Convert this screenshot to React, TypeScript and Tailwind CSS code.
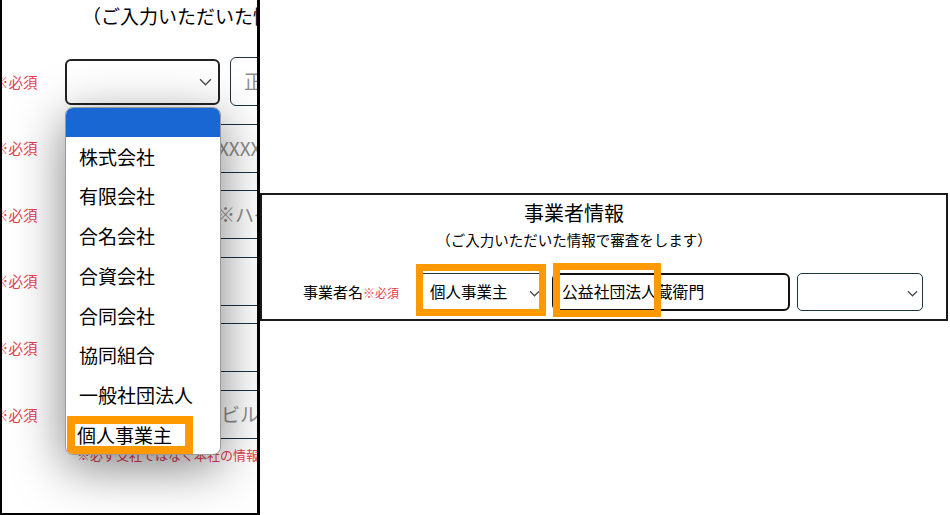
import React from "react";

const font = { fontFamily: '"Noto Sans CJK JP", "Noto Sans", sans-serif' };

function Chevron({ className }: { className: string }) {
  return (
    <svg className={className} viewBox="0 0 12 7" fill="none">
      <path d="M1 1l5 5 5-5" stroke="#4b4b4b" strokeWidth="1.3" />
    </svg>
  );
}

const options = [
  "株式会社",
  "有限会社",
  "合名会社",
  "合資会社",
  "合同会社",
  "協同組合",
  "一般社団法人",
];

function FormRow({ children }: { children?: React.ReactNode }) {
  return (
    <div className="flex items-center h-[49px]">
      <div className="w-[36px] shrink-0 overflow-hidden whitespace-nowrap text-[14.5px] text-[#e5404f]">
        <span className="inline-block -ml-[8px]">※必須</span>
      </div>
      <div className="ml-[27px] shrink-0 flex items-center">{children}</div>
    </div>
  );
}

function WideInput({ text, pad }: { text?: string; pad: string }) {
  return (
    <div
      className={`w-[320px] h-[49px] shrink-0 border border-[#1c3142] rounded-[6px] flex items-center whitespace-nowrap text-[19px] text-[#8d8d8d] ${pad}`}
    >
      {text}
    </div>
  );
}

function LeftPanel() {
  return (
    <div className="relative w-[260px] h-[515px] shrink-0 overflow-hidden border-l-2 border-r-[3px] border-b-2 border-black bg-white">
      <div className="pt-[3px] pl-[80px] text-[19px] leading-[26px] whitespace-nowrap text-black">
        （ご入力いただいた情報で審査をします）
      </div>
      <div className="mt-[28px] flex flex-col gap-[17.6px]">
        <FormRow>
          <div className="w-[155px] h-[46px] shrink-0 border-2 border-[#222] rounded-[6px] flex items-center justify-end pr-[6px]">
            <Chevron className="w-[13px] h-[8px]" />
          </div>
          <div className="ml-[10px] w-[200px] h-[49px] shrink-0 border border-[#1c3142] rounded-[6px] flex items-center pl-[13px] whitespace-nowrap text-[19px] text-[#8d8d8d]">
            正式名称
          </div>
        </FormRow>
        <FormRow>
          <WideInput text="XXXXXXXXXX" pad="pl-[141px]" />
        </FormRow>
        <FormRow>
          <WideInput text="※ハイフンなし" pad="pl-[150px]" />
        </FormRow>
        <FormRow>
          <WideInput pad="pl-[12px]" />
        </FormRow>
        <FormRow>
          <WideInput pad="pl-[12px]" />
        </FormRow>
        <FormRow>
          <WideInput text="ビル名" pad="pl-[155px]" />
        </FormRow>
      </div>
      <div className="mt-[7px] pl-[75px] text-[13px] leading-[18px] whitespace-nowrap text-[#e5404f]">
        ※必ず支社ではなく本社の情報をご入力ください
      </div>

      {/* open select menu */}
      <div className="absolute left-[63px] top-[107px] w-[156px] h-[348px] bg-white border border-[#9a9a9a] rounded-[8px] overflow-hidden shadow-[0_12px_50px_rgba(0,0,0,0.5)] text-[19px] text-black">
        <div className="h-[29px] bg-[#1967d2]" />
        {options.map((o) => (
          <div key={o} className="h-[39.75px] flex items-center pl-[13px] whitespace-nowrap">
            {o}
          </div>
        ))}
        <div className="h-[39.75px] flex items-center">
          <div className="ml-[1px] w-[126px] h-[38px] border-8 border-[#ff9900] flex items-center pl-[2px] whitespace-nowrap">
            個人事業主
          </div>
        </div>
      </div>
    </div>
  );
}

function RightPanel() {
  return (
    <div className="flex-1 pt-[193px]">
      <div className="w-[688px] h-[128px] border-2 border-[#1a1a1a] bg-white">
        <div className="pr-[60px] flex flex-col items-center">
          <div className="mt-[4px] text-[20px] leading-[28px] text-black">事業者情報</div>
          <div className="mt-[2px] text-[14.5px] leading-[22px] text-black">
            （ご入力いただいた情報で審査をします）
          </div>
        </div>
        <div className="mt-[22px] flex items-center pl-[41px]">
          <div className="flex items-baseline whitespace-nowrap">
            <span className="text-[15px] text-black">事業者名</span>
            <span className="text-[12px] text-[#e5404f]">※必須</span>
          </div>
          <div className="relative ml-[20px] w-[127px] h-[38px] border border-[#1d3445] rounded-[5px] flex items-center pl-[10px] text-[15.5px] text-black whitespace-nowrap">
            個人事業主
            <Chevron className="absolute right-[5px] top-[16px] w-[11px] h-[7px]" />
            <div className="absolute -left-[4px] -right-[1px] -top-[10px] -bottom-[6px] border-[7px] border-[#ff9900]" />
          </div>
          <div className="relative ml-[6px] w-[238px] h-[38px] border-2 border-[#111] rounded-[6px] flex items-center pl-[8px] text-[15.8px] text-black whitespace-nowrap">
            公益社団法人蔵衛門
            <div className="absolute left-[-1px] w-[108px] -top-[12px] -bottom-[8px] border-[7px] border-[#ff9900]" />
          </div>
          <div className="relative ml-[7px] w-[126px] h-[38px] border border-[#1d3445] rounded-[5px]">
            <Chevron className="absolute right-[4px] top-[16px] w-[11px] h-[7px]" />
          </div>
        </div>
      </div>
    </div>
  );
}

export default function App() {
  return (
    <div className="w-[950px] h-[515px] flex bg-white overflow-hidden" style={font}>
      <LeftPanel />
      <RightPanel />
    </div>
  );
}
